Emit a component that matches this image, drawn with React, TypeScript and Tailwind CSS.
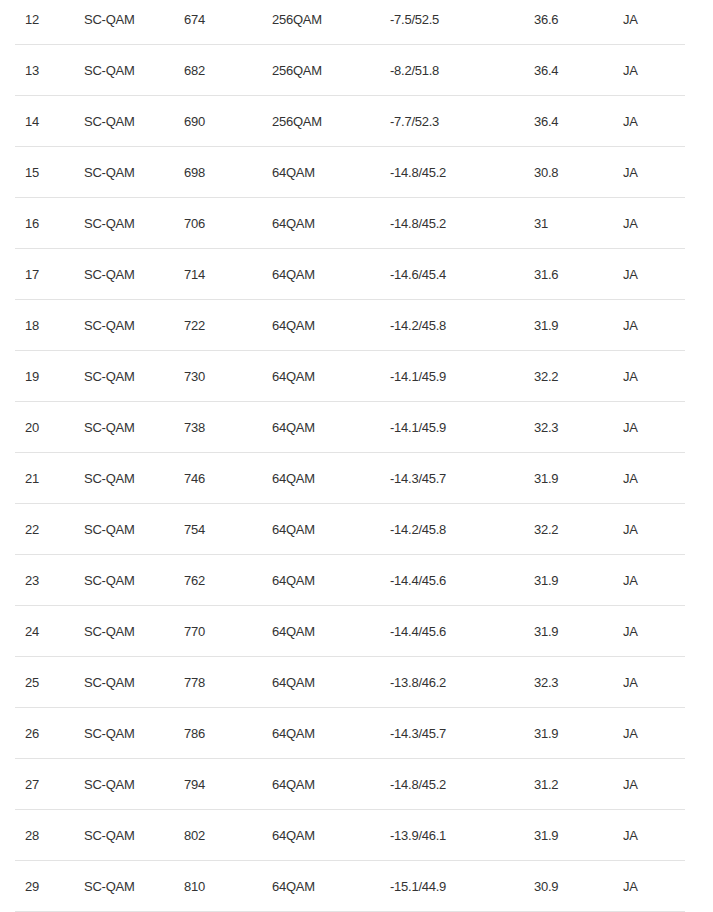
const ROWS: [number, string, number, string, string, string, string][] = [
  [12, "SC-QAM", 674, "256QAM", "-7.5/52.5", "36.6", "JA"],
  [13, "SC-QAM", 682, "256QAM", "-8.2/51.8", "36.4", "JA"],
  [14, "SC-QAM", 690, "256QAM", "-7.7/52.3", "36.4", "JA"],
  [15, "SC-QAM", 698, "64QAM", "-14.8/45.2", "30.8", "JA"],
  [16, "SC-QAM", 706, "64QAM", "-14.8/45.2", "31", "JA"],
  [17, "SC-QAM", 714, "64QAM", "-14.6/45.4", "31.6", "JA"],
  [18, "SC-QAM", 722, "64QAM", "-14.2/45.8", "31.9", "JA"],
  [19, "SC-QAM", 730, "64QAM", "-14.1/45.9", "32.2", "JA"],
  [20, "SC-QAM", 738, "64QAM", "-14.1/45.9", "32.3", "JA"],
  [21, "SC-QAM", 746, "64QAM", "-14.3/45.7", "31.9", "JA"],
  [22, "SC-QAM", 754, "64QAM", "-14.2/45.8", "32.2", "JA"],
  [23, "SC-QAM", 762, "64QAM", "-14.4/45.6", "31.9", "JA"],
  [24, "SC-QAM", 770, "64QAM", "-14.4/45.6", "31.9", "JA"],
  [25, "SC-QAM", 778, "64QAM", "-13.8/46.2", "32.3", "JA"],
  [26, "SC-QAM", 786, "64QAM", "-14.3/45.7", "31.9", "JA"],
  [27, "SC-QAM", 794, "64QAM", "-14.8/45.2", "31.2", "JA"],
  [28, "SC-QAM", 802, "64QAM", "-13.9/46.1", "31.9", "JA"],
  [29, "SC-QAM", 810, "64QAM", "-15.1/44.9", "30.9", "JA"],
];

const WIDTHS = ["w-[59px]", "w-[100px]", "w-[88px]", "w-[118px]", "w-[144px]", "w-[89px]", "w-[72px]"];

export default function App() {
  return (
    <div className="bg-white min-h-screen px-[15px] overflow-hidden" style={{ height: 912 }}>
      <table
        className="w-[670px] table-fixed border-collapse text-[13px] tracking-[-0.25px] leading-[20px] text-[#333]"
        style={{ fontFamily: '"Liberation Sans", Arial, sans-serif' }}
      >
        <colgroup>
          {WIDTHS.map((w, i) => (
            <col key={i} className={w} />
          ))}
        </colgroup>
        <tbody>
          {/* rows scrolled in: first row's top is cut off */}
          {ROWS.map((row, i) => (
            <tr key={row[0]} className={i === 0 ? "" : "border-t border-[#e3e3e3]"}>
              {row.map((cell, j) => (
                <td key={j} className={`px-[10px] pb-[14px] text-left align-top ${i === 0 ? "pt-[10px]" : "pt-[16px]"}`}>
                  {cell}
                </td>
              ))}
            </tr>
          ))}
          <tr className="border-t border-[#e3e3e3]">
            <td colSpan={7} className="h-[20px]" />
          </tr>
        </tbody>
      </table>
    </div>
  );
}
